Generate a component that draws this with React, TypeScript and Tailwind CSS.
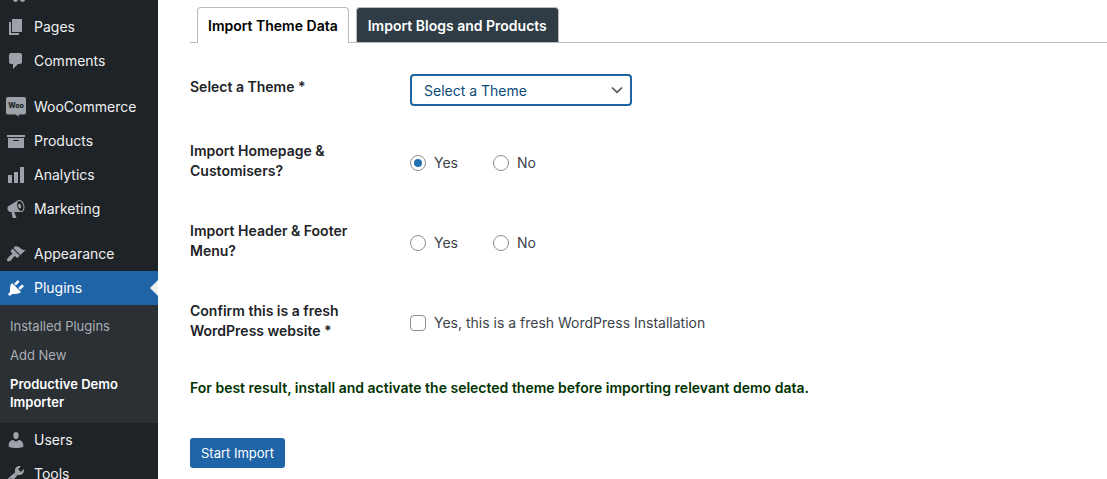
import { useState, type ReactNode } from "react";

const icons = {
  media:
    "M13 11V4c0-.55-.45-1-1-1h-1.67L9 1H5L3.68 3H2c-.55 0-1 .45-1 1v7c0 .55.45 1 1 1h10c.55 0 1-.45 1-1zM7 4.5c1.38 0 2.5 1.12 2.5 2.5S8.38 9.5 7 9.5 4.5 8.38 4.5 7 5.62 4.5 7 4.5zM14 6h5v10.5c0 1.38-1.12 2.5-2.5 2.5S14 17.88 14 16.5s1.12-2.5 2.5-2.5c.17 0 .34.02.5.05V9h-3V6zm-4 8.05V13h2v3.5c0 1.38-1.12 2.5-2.5 2.5S7 17.88 7 16.5 8.12 14 9.5 14c.17 0 .34.02.5.05z",
  pages: "M6 15V2h10v13H6zm-1 1h8v2H3V5h2v11z",
  comments:
    "M5 2h9c1.1 0 2 .9 2 2v7c0 1.1-.9 2-2 2h-2l-5 5v-5H5c-1.1 0-2-.9-2-2V4c0-1.1.9-2 2-2z",
  products: "M19 4v2H1V4h18zM2 7h16v10H2V7zm11 3V9H7v1h6z",
  analytics: "M18 18V2h-4v16h4zm-6 0V7H8v11h4zm-6 0v-8H2v8h4z",
  marketing:
    "M18.15 5.94c.46 1.62.38 3.22-.02 4.48-.42 1.28-1.26 2.18-2.3 2.48-.16.06-.26.06-.4.06-.06.02-.12.02-.18.02-.06.02-.14.02-.22.02h-6.8l2.22 5.5c.02.14-.06.26-.14.34-.08.1-.24.16-.34.16H6.95c-.1 0-.26-.06-.34-.16-.08-.08-.16-.2-.14-.34l-1-5.5H4.25l-.02-.02c-.5.06-1.08-.18-1.54-.62s-.88-1.08-1.06-1.88c-.24-.8-.2-1.56-.02-2.2.18-.62.58-1.08 1.06-1.3l.02-.02 9-5.4c.1-.06.18-.1.24-.16.06-.04.14-.08.24-.12.16-.08.28-.12.5-.18 1.04-.3 2.24.1 3.22.98s1.84 2.24 2.26 3.86zm-2.58 5.98h-.02c.4-.1.74-.34 1.04-.7.58-.7.86-1.76.86-3.04 0-.64-.1-1.3-.28-1.98-.34-1.36-1.02-2.5-1.78-3.24s-1.68-1.1-2.46-.88c-.82.22-1.4.96-1.7 2-.32 1.04-.28 2.36.06 3.72.38 1.36 1 2.5 1.8 3.24.78.74 1.62 1.1 2.48.88zm-2.54-7.08c.22-.04.42-.02.62.04.38.16.76.48 1.02 1s.42 1.2.42 1.78c0 .3-.04.56-.12.8-.18.48-.44.84-.86.94-.34.1-.8-.06-1.14-.4s-.64-.86-.78-1.5c-.18-.62-.12-1.24.02-1.72s.48-.84.82-.94z",
  appearance:
    "M14.48 11.06L7.41 3.99l1.5-1.5c.5-.56 2.3-.47 3.51.32 1.21.8 1.43 1.28 2.91 2.1 1.18.64 2.45 1.26 4.45.85zm-.71.71L6.7 4.7 4.93 6.47c-.39.39-.39 1.02 0 1.41l1.06 1.06c.39.39.39 1.03 0 1.42-.6.6-1.43 1.11-2.21 1.69-.35.26-.7.53-1.01.84C1.43 14.23.4 16.08 1.4 17.07c.99 1 2.84-.03 4.18-1.36.31-.31.58-.66.85-1.02.57-.78 1.08-1.61 1.69-2.21.39-.39 1.02-.39 1.41 0l1.06 1.06c.39.39 1.02.39 1.41 0z",
  plugins:
    "M13.11 4.36L9.87 7.6 8 5.73l3.24-3.24c.35-.34 1.05-.2 1.56.32.52.51.66 1.21.31 1.55zm-8 1.77l.91-1.12 9.01 9.01-1.19.84c-.71.71-2.63 1.16-3.82 1.16H6.14L4.9 17.26c-.59.59-1.54.59-2.12 0-.59-.58-.59-1.53 0-2.12l1.24-1.24v-3.88c0-1.13.4-3.19 1.09-3.89zm7.26 3.97l3.24-3.24c.34-.35 1.04-.21 1.55.31.52.51.66 1.21.31 1.55l-3.24 3.25z",
  users:
    "M10 9.25c-2.27 0-2.73-3.44-2.73-3.44C7 4.02 7.82 2 9.97 2c2.16 0 2.98 2.02 2.71 3.81 0 0-.41 3.44-2.68 3.44zm0 2.57L12.72 10c2.39 0 4.52 2.33 4.52 4.53v2.49s-3.65 1.13-7.24 1.13c-3.65 0-7.24-1.13-7.24-1.13v-2.49c0-2.25 1.94-4.48 4.47-4.48z",
  tools:
    "M16.68 9.77c-1.34 1.34-3.3 1.67-4.95.99l-5.41 6.52c-.99.99-2.59.99-3.58 0s-.99-2.59 0-3.57l6.52-5.42c-.68-1.65-.35-3.61.99-4.95 1.28-1.28 3.12-1.62 4.72-1.06l-2.89 2.89 2.82 2.82 2.86-2.87c.53 1.58.18 3.39-1.08 4.65zM3.81 16.21c.4.39 1.04.39 1.43 0 .4-.4.4-1.04 0-1.43-.39-.4-1.03-.4-1.43 0-.39.39-.39 1.03 0 1.43z",
};

function Icon({ name }: { name: keyof typeof icons }) {
  return (
    <svg viewBox="0 0 20 20" className="size-5 shrink-0 fill-current" aria-hidden="true">
      <path d={icons[name]} />
    </svg>
  );
}

function WooIcon() {
  return (
    <svg viewBox="0 0 20 20" className="size-5 shrink-0 fill-current" aria-hidden="true">
      <path d="M2 0h16a2 2 0 0 1 2 2v13.500a2 2 0 0 1-2 2h-5.500l.8 2.300-3.800-2.300H2a2 2 0 0 1-2-2V2a2 2 0 0 1 2-2z" />
      <text
        x="10"
        y="11"
        textAnchor="middle"
        className="fill-[#1d2327] font-['Inter',sans-serif] text-[7px] font-extrabold"
      >
        Woo
      </text>
    </svg>
  );
}

function MenuItem({ icon, children }: { icon: ReactNode; children: ReactNode }) {
  return (
    <li>
      <a href="#" className="flex h-[34px] items-center gap-2 pl-1.5 text-sm text-[#f0f0f1]">
        <span className="text-[#9ca2a7]">{icon}</span>
        {children}
      </a>
    </li>
  );
}

function Sidebar() {
  return (
    <nav aria-label="Admin menu" className="w-[158px] shrink-0 bg-[#1d2327]">
      <div className="flex h-2.5 items-start overflow-hidden pl-1.5 text-[#9ca2a7]">
        <a href="#" aria-label="Media" className="-mt-[17px]">
          <Icon name="media" />
        </a>
      </div>
      <ul>
        <MenuItem icon={<Icon name="pages" />}>Pages</MenuItem>
        <MenuItem icon={<Icon name="comments" />}>Comments</MenuItem>
      </ul>
      <ul className="mt-3">
        <MenuItem icon={<WooIcon />}>WooCommerce</MenuItem>
        <MenuItem icon={<Icon name="products" />}>Products</MenuItem>
        <MenuItem icon={<Icon name="analytics" />}>Analytics</MenuItem>
        <MenuItem icon={<Icon name="marketing" />}>Marketing</MenuItem>
      </ul>
      <ul className="mt-[11px]">
        <MenuItem icon={<Icon name="appearance" />}>Appearance</MenuItem>
        <li>
          <a
            href="#"
            aria-current="true"
            className="flex h-[34px] items-center gap-2 bg-[#1e64a7] pl-1.5 text-sm text-white"
          >
            <Icon name="plugins" />
            Plugins
            <svg viewBox="0 0 8 16" className="ml-auto h-4 w-2 fill-[#f0f0f1]" aria-hidden="true">
              <path d="M8 0v16L0 8z" />
            </svg>
          </a>
          <ul className="bg-[#2a3034] px-2.5 py-3 text-[13px] leading-[18px] text-[#a9afb4]">
            <li>
              <a href="#" className="block pb-[11px]">Installed Plugins</a>
            </li>
            <li>
              <a href="#" className="block pb-[11px]">Add New</a>
            </li>
            <li>
              <a href="#" className="block font-semibold text-white">Productive Demo Importer</a>
            </li>
          </ul>
        </li>
        <MenuItem icon={<Icon name="users" />}>Users</MenuItem>
        <MenuItem icon={<Icon name="tools" />}>Tools</MenuItem>
      </ul>
    </nav>
  );
}

const rowClass = "grid grid-cols-[180px_1fr] gap-x-10";
const labelClass = "text-sm leading-5 font-semibold text-[#1d2327]";

function YesNo({ name, legend, initial }: { name: string; legend: string; initial?: string }) {
  const [value, setValue] = useState(initial);
  return (
    <div role="radiogroup" aria-labelledby={name} className={`${rowClass} h-20`}>
      <div id={name} className={labelClass}>
        {legend}
      </div>
      <div className="flex h-11 items-center gap-[35px]">
        {["Yes", "No"].map((option) => (
          <label key={option} className="flex items-center gap-2">
            <input
              type="radio"
              name={name}
              checked={value === option}
              onChange={() => setValue(option)}
              className="grid size-4 appearance-none place-content-center rounded-full border border-[#8c8f94] bg-white before:size-2 before:rounded-full checked:before:bg-[#2271b1]"
            />
            {option}
          </label>
        ))}
      </div>
    </div>
  );
}

export default function App() {
  return (
    <div className="flex h-screen overflow-hidden bg-white font-['Inter','Liberation_Sans',sans-serif] text-sm text-[#3c434a]">
      <Sidebar />
      <main className="min-w-0 flex-1 pt-[7px] pl-8">
        <div role="tablist" className="flex gap-[7px] border-b border-[#b9bbbe] pl-[7px] text-sm font-semibold">
          <button
            type="button"
            role="tab"
            aria-selected="true"
            className="-mb-px h-9 rounded-t border border-b-0 border-[#b9bbbe] bg-white px-2.5 whitespace-nowrap text-black"
          >
            Import Theme Data
          </button>
          <button
            type="button"
            role="tab"
            aria-selected="false"
            className="h-[35px] rounded-t border border-b-0 border-[#b9bbbe] bg-[#2f3c45] px-[11px] pt-px whitespace-nowrap text-white"
          >
            Import Blogs and Products
          </button>
        </div>

        <form onSubmit={(event) => event.preventDefault()} className="pt-[31px]">
          <div className={`${rowClass} h-[67px]`}>
            <label htmlFor="theme" className={`${labelClass} pt-[3px]`}>
              Select a Theme *
            </label>
            <div className="grid h-8 w-[222px] items-center">
              <select
                id="theme"
                className="col-start-1 row-start-1 h-8 w-full appearance-none rounded border-2 border-[#1e64a0] bg-white pt-px pr-6 pl-3 text-sm text-[#0a4b78] outline-none"
              >
                <option>Select a Theme</option>
              </select>
              <svg
                viewBox="0 0 12 8"
                className="pointer-events-none col-start-1 row-start-1 mr-[9px] h-2 w-3 justify-self-end fill-none stroke-[#50575e] stroke-[1.700]"
                aria-hidden="true"
              >
                <path d="M1 1.500 6 6.300l5-4.800" />
              </svg>
            </div>
          </div>

          <YesNo name="homepage" legend="Import Homepage & Customisers?" initial="Yes" />
          <YesNo name="menus" legend="Import Header & Footer Menu?" />

          <div className={`${rowClass} h-[77px]`}>
            <label htmlFor="fresh" className={labelClass}>
              Confirm this is a fresh WordPress website *
            </label>
            <label className="flex h-11 items-center gap-2">
              <input
                id="fresh"
                type="checkbox"
                className="size-4 appearance-none rounded border border-[#8c8f94] bg-white checked:bg-[#2271b1]"
              />
              Yes, this is a fresh WordPress Installation
            </label>
          </div>

          <p className="leading-5 font-semibold text-[#003300]">
            For best result, install and activate the selected theme before importing relevant demo data.
          </p>

          <button
            type="submit"
            className="mt-10 h-[30px] rounded-[3px] bg-[#1e64a7] px-[11px] text-[13px] text-white"
          >
            Start Import
          </button>
        </form>
      </main>
    </div>
  );
}
